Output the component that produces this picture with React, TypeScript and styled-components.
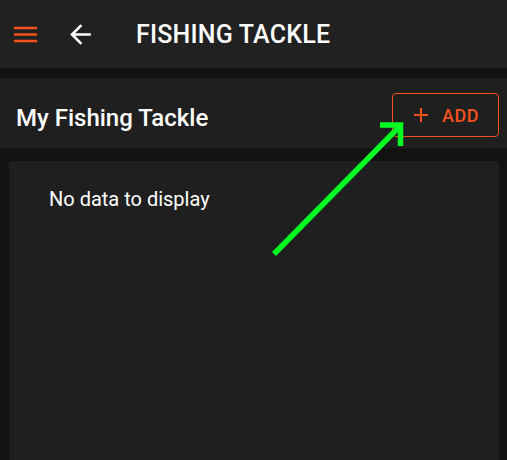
import styled, { createGlobalStyle } from "styled-components";

const GlobalStyle = createGlobalStyle`
  html, body {
    margin: 0;
    padding: 0;
    background: #121212;
    font-family: Roboto, "Noto Sans", sans-serif;
    color: #fff;
  }
`;

const Page = styled.div`
  position: relative;
  height: 460px;
  overflow: hidden;
  display: flex;
  flex-direction: column;
`;

const AppBar = styled.header`
  height: 68px;
  background: #212121;
  display: flex;
  align-items: center;
  padding-left: 10px;
  box-sizing: border-box;
`;

const IconButton = styled.button`
  width: 31px;
  height: 31px;
  padding: 0;
  border: none;
  background: none;
  display: flex;
  color: ${(p: { $color: string }) => p.$color};
  margin-right: ${(p: { $gap?: number }) => p.$gap ?? 0}px;
  cursor: pointer;
`;

const Title = styled.h1`
  margin: 0;
  font-size: 25px;
  font-weight: 500;
  letter-spacing: 0.2px;
  color: #fff;
`;

const SectionHeader = styled.div`
  margin-top: 10px;
  height: 70px;
  background: #1f1f1f;
  display: flex;
  align-items: center;
  justify-content: space-between;
  padding: 0 8px 0 16px;
`;

const SectionTitle = styled.h2`
  margin: 0;
  padding-top: 10px;
  font-size: 24px;
  font-weight: 500;
  color: #fff;
`;

const AddButton = styled.button`
  width: 107px;
  height: 44px;
  border: 1px solid #f4511e;
  border-radius: 4px;
  background: transparent;
  color: #f4511e;
  font-family: Roboto, sans-serif;
  font-size: 18px;
  font-weight: 500;
  letter-spacing: 0.5px;
  display: flex;
  align-items: center;
  justify-content: center;
  gap: 14px;
  padding: 0 0 0 2px;
  margin-top: 4px;
  cursor: pointer;
`;

const Card = styled.div`
  flex: 1;
  margin: 13px 8px 0 9px;
  background: #1f1f1f;
  border-radius: 4px 4px 0 0;
  padding: 26px 40px;
`;

const EmptyText = styled.div`
  font-size: 20px;
  color: #fff;
`;

const Pointer = styled.svg`
  position: absolute;
  left: 0;
  top: 0;
  pointer-events: none;
`;

export default function App() {
  return (
    <>
      <GlobalStyle />
      <Page>
        <AppBar>
          <IconButton $color="#f4511e" $gap={24} aria-label="menu">
            <svg width="31" height="31" viewBox="0 0 24 24" fill="currentColor">
              <path d="M3 18h18v-2H3v2zm0-5h18v-2H3v2zm0-7v2h18V6H3z" />
            </svg>
          </IconButton>
          <IconButton $color="#fff" $gap={40} aria-label="back">
            <svg width="31" height="31" viewBox="0 0 24 24" fill="currentColor">
              <path d="M20 11H7.83l5.59-5.59L12 4l-8 8 8 8 1.41-1.41L7.83 13H20v-2z" />
            </svg>
          </IconButton>
          <Title>FISHING TACKLE</Title>
        </AppBar>
        <SectionHeader>
          <SectionTitle>My Fishing Tackle</SectionTitle>
          <AddButton>
            <svg width="14" height="14" viewBox="0 0 14 14">
              <path d="M7 0v14M0 7h14" stroke="currentColor" strokeWidth="2" />
            </svg>
            ADD
          </AddButton>
        </SectionHeader>
        <Card>
          <EmptyText>No data to display</EmptyText>
        </Card>
        <Pointer width="507" height="460" viewBox="0 0 507 460">
          <g stroke="#00ff22" strokeWidth="5.5" fill="none">
            <path d="M274 254L400 126" />
            <path d="M380 125H400.5V146" />
          </g>
        </Pointer>
      </Page>
    </>
  );
}
